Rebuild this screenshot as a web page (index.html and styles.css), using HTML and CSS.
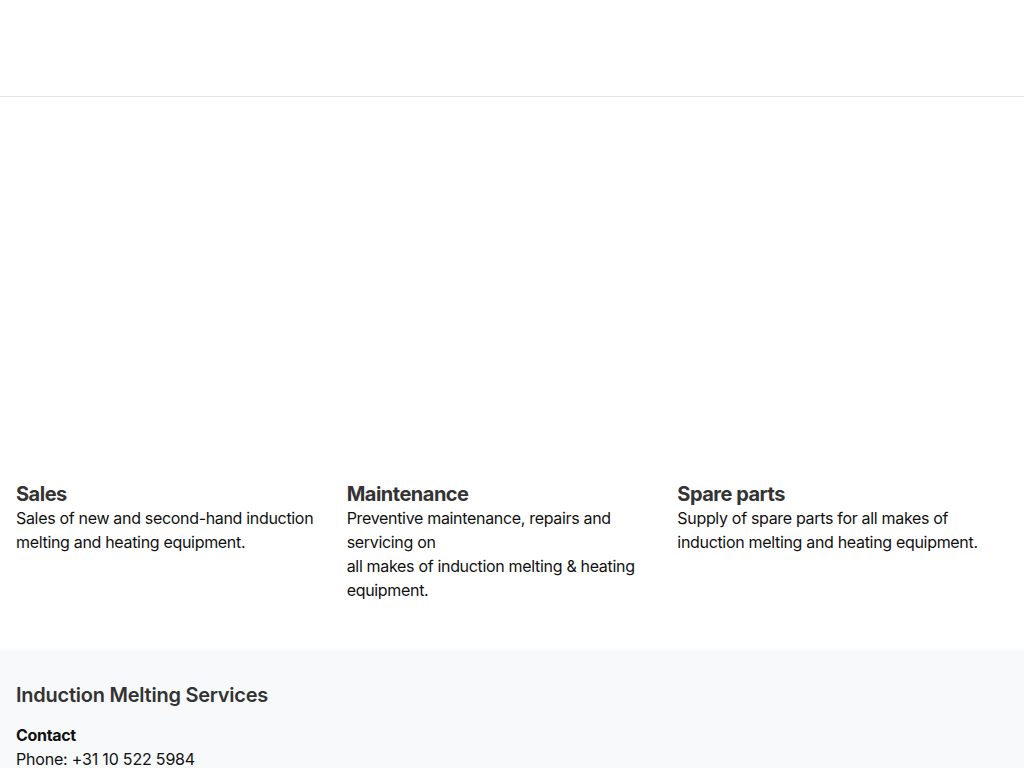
FILE: index.html
```html
<!DOCTYPE html>
<html lang="en">
<head>
<meta charset="utf-8">
<title>Induction Melting Services</title>
<link rel="stylesheet" href="styles.css">
</head>
<body>
<header class="site-header"></header>
<main class="main">
  <section class="services">
    <article class="service">
      <div class="service-media"></div>
      <h2 class="service-title">Sales</h2>
      <p class="service-text">Sales of new and second-hand induction melting and heating equipment.</p>
    </article>
    <article class="service">
      <div class="service-media"></div>
      <h2 class="service-title">Maintenance</h2>
      <p class="service-text">Preventive maintenance, repairs and servicing on<br>all makes of induction melting &amp; heating equipment.</p>
    </article>
    <article class="service">
      <div class="service-media"></div>
      <h2 class="service-title">Spare parts</h2>
      <p class="service-text">Supply of spare parts for all makes of induction melting and heating equipment.</p>
    </article>
  </section>
</main>
<footer class="site-footer">
  <h3 class="footer-title">Induction Melting Services</h3>
  <div class="footer-contact">
    <strong class="contact-label">Contact</strong>
    <p class="contact-line">Phone: +31 10 522 5984</p>
  </div>
</footer>
</body>
</html>
```

FILE: styles.css
```css
* { box-sizing: border-box; }
html, body { margin: 0; padding: 0; }
body {
  font-family: Inter, "Noto Sans", sans-serif;
  font-size: 16px;
  line-height: 24px;
  letter-spacing: -0.02em;
  color: #111;
  background: #fff;
}
.site-header {
  height: 97px;
  border-bottom: 1px solid #e4e4ea;
  background: #fff;
}
.main { padding: 0 16px 48px; }
.services {
  display: grid;
  grid-template-columns: repeat(3, 1fr);
}
.service { padding-right: 16px; }
.service-media { height: 385px; }
.service-title {
  margin: 0;
  font-size: 20px;
  line-height: 24px;
  font-weight: 700;
  letter-spacing: -0.025em;
  color: #333;
}
.service-text { margin: 0; }
.site-footer {
  background: #f8f9fa;
  padding: 33px 16px 24px;
}
.footer-title {
  margin: 0 0 16px;
  font-size: 20px;
  line-height: 24px;
  font-weight: 600;
  letter-spacing: -0.012em;
  color: #333;
}
.contact-label { display: block; font-weight: 700; color: #111; }
.contact-line { margin: 0; letter-spacing: -0.012em; }
```
